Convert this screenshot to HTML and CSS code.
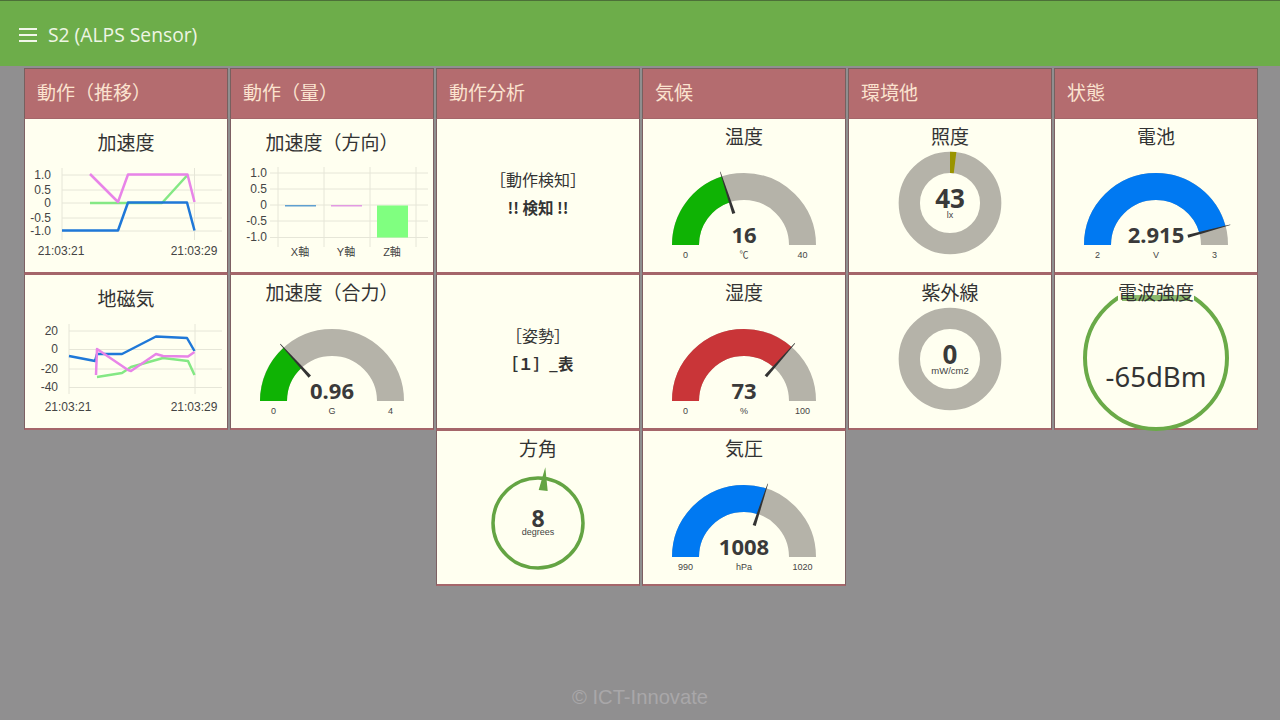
FILE: index.html
```html
<!DOCTYPE html>
<html lang="ja">
<head>
    <meta charset="UTF-8">
    <meta name="viewport" content="width=device-width, initial-scale=1.0">
    <title>S2 (ALPS Sensor)</title>
    <link rel="stylesheet" href="styles.css">
</head>
<body>

    <header class="toolbar">
        <span class="menu-btn"><i></i><i></i><i></i></span>
        <span class="toolbar-title">S2 (ALPS Sensor)</span>
    </header>

    <main class="dashboard">

        <!-- 動作（推移） -->
        <section class="group">
            <h2 class="group-title">動作（推移）</h2>
            <div class="card card-chart">
                <h3 class="card-title">加速度</h3>
                <svg class="widget" viewBox="25 119 202 152">
                    <g class="grid">
                        <path d="M62 175H222M62 190H222M62 203H222M62 218H222M62 231H222M62 168V240M194.5 168V240"/>
                    </g>
                    <g class="axis-label end">
                        <text x="51" y="179">1.0</text>
                        <text x="51" y="194">0.5</text>
                        <text x="51" y="207">0</text>
                        <text x="51" y="222">-0.5</text>
                        <text x="51" y="235">-1.0</text>
                    </g>
                    <g class="axis-label mid">
                        <text x="61" y="255">21:03:21</text>
                        <text x="194" y="255">21:03:29</text>
                    </g>
                    <polyline class="line green" points="90,203 128,203 162,203 187.5,175"/>
                    <polyline class="line pink" points="90,174 118,202 128,174.5 187.5,174.5 194.5,202"/>
                    <polyline class="line blue" points="62,230.5 118,230.5 128,202.5 187,202.5 194.5,230.5"/>
                </svg>
            </div>
            <div class="card card-chart">
                <h3 class="card-title">地磁気</h3>
                <svg class="widget" viewBox="25 275 202 152">
                    <g class="grid">
                        <path d="M69 331H222M69 349.5H222M69 369H222M69 387.5H222M69 324V394M195 324V394"/>
                    </g>
                    <g class="axis-label end">
                        <text x="58" y="335">20</text>
                        <text x="58" y="353">0</text>
                        <text x="58" y="373">-20</text>
                        <text x="58" y="391">-40</text>
                    </g>
                    <g class="axis-label mid">
                        <text x="68" y="411">21:03:21</text>
                        <text x="194" y="411">21:03:29</text>
                    </g>
                    <polyline class="line green" points="97,377 122,373 131,367 163,358 188,361 194.5,375"/>
                    <polyline class="line blue" points="69,356 95,361 97,354 122,354 156,336.5 187,338 194.5,351"/>
                    <polyline class="line pink" points="96,375 97,349 128,370 131,371 156,354 163,356 188,356.5 194.5,352"/>
                </svg>
            </div>
        </section>

        <!-- 動作（量） -->
        <section class="group">
            <h2 class="group-title">動作（量）</h2>
            <div class="card card-chart">
                <h3 class="card-title">加速度（方向）</h3>
                <svg class="widget" viewBox="231 119 202 152">
                    <g class="grid">
                        <path d="M270 173H428M270 189H428M270 205H428M270 221H428M270 237.5H428M278 167V247M324 167V247M370 167V247M416 167V247"/>
                    </g>
                    <g class="axis-label end">
                        <text x="267" y="177">1.0</text>
                        <text x="267" y="193">0.5</text>
                        <text x="267" y="209">0</text>
                        <text x="267" y="225">-0.5</text>
                        <text x="267" y="241">-1.0</text>
                    </g>
                    <g class="axis-label mid small-cjk">
                        <text x="300" y="256">X軸</text>
                        <text x="346" y="256">Y軸</text>
                        <text x="392" y="256">Z軸</text>
                    </g>
                    <rect class="bar-x" x="285" y="205" width="31" height="1.5"/>
                    <rect class="bar-y" x="331" y="205" width="31" height="1.5"/>
                    <rect class="bar-z" x="377" y="205.5" width="31" height="32"/>
                </svg>
            </div>
            <div class="card">
                <h3 class="card-title">加速度（合力）</h3>
                <svg class="widget" viewBox="0 0 202 116">
                    <path class="arc track" d="M42.5 90A58.5 58.5 0 0 1 159.5 90"/>
                    <path class="arc fill-green" d="M42.5 90A58.5 58.5 0 0 1 159.5 90" pathLength="100" stroke-dasharray="26.5 100"/>
                    <polygon class="needle" points="-33,-1.6 -33,1.6 -77,0.3 -77,-0.3" transform="translate(101 90) rotate(47.7)"/>
                    <text class="gauge-value" x="101" y="88">0.96</text>
                    <text class="gauge-label" x="42.5" y="103">0</text>
                    <text class="gauge-label" x="101" y="103">G</text>
                    <text class="gauge-label" x="159.5" y="103">4</text>
                </svg>
            </div>
        </section>

        <!-- 動作分析 -->
        <section class="group">
            <h2 class="group-title">動作分析</h2>
            <div class="card card-text">
                <p class="text-label">［動作検知］</p>
                <p class="text-value">!! 検知 !!</p>
            </div>
            <div class="card card-text">
                <p class="text-label">［姿勢］</p>
                <p class="text-value">［１］_表</p>
            </div>
            <div class="card">
                <h3 class="card-title">方角</h3>
                <svg class="widget" viewBox="0 0 202 116">
                    <circle class="compass-ring" cx="101" cy="56" r="45"/>
                    <polygon class="compass-pointer" points="108.3,0.3 110.7,24 101.7,23"/>
                    <text class="dial-value compass-value" x="101" y="60">8</text>
                    <text class="dial-unit" x="101" y="68">degrees</text>
                </svg>
            </div>
        </section>

        <!-- 気候 -->
        <section class="group">
            <h2 class="group-title">気候</h2>
            <div class="card">
                <h3 class="card-title">温度</h3>
                <svg class="widget" viewBox="0 0 202 116">
                    <path class="arc track" d="M42.5 90A58.5 58.5 0 0 1 159.5 90"/>
                    <path class="arc fill-green" d="M42.5 90A58.5 58.5 0 0 1 159.5 90" pathLength="100" stroke-dasharray="40 100"/>
                    <polygon class="needle" points="-33,-1.6 -33,1.6 -77,0.3 -77,-0.3" transform="translate(101 90) rotate(72)"/>
                    <text class="gauge-value" x="101" y="88">16</text>
                    <text class="gauge-label" x="42.5" y="103">0</text>
                    <text class="gauge-label" x="101" y="103">℃</text>
                    <text class="gauge-label" x="159.5" y="103">40</text>
                </svg>
            </div>
            <div class="card">
                <h3 class="card-title">湿度</h3>
                <svg class="widget" viewBox="0 0 202 116">
                    <path class="arc track" d="M42.5 90A58.5 58.5 0 0 1 159.5 90"/>
                    <path class="arc fill-red" d="M42.5 90A58.5 58.5 0 0 1 159.5 90" pathLength="100" stroke-dasharray="73 100"/>
                    <polygon class="needle" points="-33,-1.6 -33,1.6 -77,0.3 -77,-0.3" transform="translate(101 90) rotate(131.4)"/>
                    <text class="gauge-value" x="101" y="88">73</text>
                    <text class="gauge-label" x="42.5" y="103">0</text>
                    <text class="gauge-label" x="101" y="103">%</text>
                    <text class="gauge-label" x="159.5" y="103">100</text>
                </svg>
            </div>
            <div class="card">
                <h3 class="card-title">気圧</h3>
                <svg class="widget" viewBox="0 0 202 116">
                    <path class="arc track" d="M42.5 90A58.5 58.5 0 0 1 159.5 90"/>
                    <path class="arc fill-blue" d="M42.5 90A58.5 58.5 0 0 1 159.5 90" pathLength="100" stroke-dasharray="60 100"/>
                    <polygon class="needle" points="-33,-1.6 -33,1.6 -77,0.3 -77,-0.3" transform="translate(101 90) rotate(108)"/>
                    <text class="gauge-value" x="101" y="88">1008</text>
                    <text class="gauge-label" x="42.5" y="103">990</text>
                    <text class="gauge-label" x="101" y="103">hPa</text>
                    <text class="gauge-label" x="159.5" y="103">1020</text>
                </svg>
            </div>
        </section>

        <!-- 環境他 -->
        <section class="group">
            <h2 class="group-title">環境他</h2>
            <div class="card">
                <h3 class="card-title">照度</h3>
                <svg class="widget" viewBox="0 0 202 116">
                    <circle class="donut track" cx="101" cy="48" r="40.7"/>
                    <circle class="donut fill-gold" cx="101" cy="48" r="40.7" pathLength="100" stroke-dasharray="2 100" transform="rotate(-90 101 48)"/>
                    <text class="dial-value" x="101" y="52.7">43</text>
                    <text class="dial-unit" x="101" y="62.5">lx</text>
                </svg>
            </div>
            <div class="card">
                <h3 class="card-title">紫外線</h3>
                <svg class="widget" viewBox="0 0 202 116">
                    <circle class="donut track" cx="101" cy="48" r="40.7"/>
                    <text class="dial-value" x="101" y="53">0</text>
                    <text class="dial-unit wide" x="101" y="62.5">mW/cm2</text>
                </svg>
            </div>
        </section>

        <!-- 状態 -->
        <section class="group">
            <h2 class="group-title">状態</h2>
            <div class="card">
                <h3 class="card-title">電池</h3>
                <svg class="widget" viewBox="0 0 202 116">
                    <path class="arc track" d="M42.5 90A58.5 58.5 0 0 1 159.5 90"/>
                    <path class="arc fill-blue" d="M42.5 90A58.5 58.5 0 0 1 159.5 90" pathLength="100" stroke-dasharray="91.5 100"/>
                    <polygon class="needle" points="-33,-1.6 -33,1.6 -77,0.3 -77,-0.3" transform="translate(101 90) rotate(164.7)"/>
                    <text class="gauge-value" x="101" y="88">2.915</text>
                    <text class="gauge-label" x="42.5" y="103">2</text>
                    <text class="gauge-label" x="101" y="103">V</text>
                    <text class="gauge-label" x="159.5" y="103">3</text>
                </svg>
            </div>
            <div class="card">
                <h3 class="card-title signal-title"><span>電波強度</span></h3>
                <svg class="widget" viewBox="0 0 202 116">
                    <circle class="signal-ring" cx="101" cy="47" r="71"/>
                    <text class="signal-value" x="101" y="75.5">-65dBm</text>
                </svg>
            </div>
        </section>

    </main>

    <footer class="footer">© ICT-Innovate</footer>

</body>
</html>
```

FILE: styles.css
```css
* {
    box-sizing: border-box;
}
body {
    margin: 0;
    height: 720px;
    display: flex;
    flex-direction: column;
    overflow: hidden;
    background-color: #908f90;
    font-family: "Noto Sans", "Noto Sans CJK JP", sans-serif;
    color: #333;
}
.toolbar {
    height: 66px;
    flex: none;
    display: flex;
    align-items: center;
    gap: 11px;
    padding: 2px 0 0 19px;
    background-color: #6dad4a;
    border-top: 1px solid #4c6f38;
}
.menu-btn {
    display: flex;
    flex-direction: column;
    gap: 4px;
    width: 18px;
}
.menu-btn i {
    display: block;
    height: 2px;
    background-color: #f1f6ea;
}
.toolbar-title {
    margin-bottom: 1px;
    font-family: "Open Sans", "Noto Sans", sans-serif;
    font-size: 19.3px;
    color: #eef5e4;
}
.dashboard {
    display: flex;
    gap: 2px;
    padding: 2px 0 0 24px;
}
.group {
    width: 204px;
    display: flex;
    flex-direction: column;
}
.group-title {
    height: 50px;
    margin: 0;
    padding: 0 12px;
    line-height: 45px;
    font-size: 19px;
    font-weight: 400;
    color: #fbe3cf;
    background-color: #b46c6f;
    border: 1px solid #77605f;
    border-bottom: 0;
    font-family: "Noto Sans CJK JP", sans-serif;
}
.card {
    height: 156px;
    display: flex;
    flex-direction: column;
    background-color: #fffff0;
    border-style: solid;
    border-width: 1px 1px 2px;
    border-color: #a5666a #7d6063;
}
.card-title {
    height: 36px;
    margin: 0;
    flex: none;
    text-align: center;
    font-size: 19px;
    font-weight: 400;
    line-height: 34px;
    font-family: "Noto Sans CJK JP", sans-serif;
}
.card-chart .card-title {
    height: 0;
    position: relative;
    top: 6px;
}
.card-chart .widget {
    height: 152px;
}
.card-text {
    align-items: center;
    justify-content: center;
    gap: 9px;
    padding-bottom: 4px;
}
.text-label,
.text-value {
    margin: 0;
    line-height: 19px;
    font-family: "Noto Sans CJK JP", sans-serif;
}
.text-label {
    font-size: 16px;
}
.text-value {
    font-size: 15.5px;
    font-weight: 700;
}
.signal-title {
    position: relative;
    z-index: 1;
}
.signal-title span {
    display: inline-block;
    line-height: 18px;
    background: linear-gradient(#8ab86a, #8ab86a) center bottom / 68px 6px no-repeat, #fffff0;
}
.widget {
    display: block;
    width: 202px;
    height: 116px;
    overflow: visible;
}
.grid path {
    fill: none;
    stroke: #e6e6d8;
    stroke-width: 1;
}
.axis-label text {
    font-family: "Liberation Sans", sans-serif;
    font-size: 12px;
    fill: #444;
}
.axis-label.end text {
    text-anchor: end;
}
.axis-label.mid text {
    text-anchor: middle;
}
.axis-label.small-cjk text {
    font-family: "Liberation Sans", "Noto Sans CJK JP", sans-serif;
    font-size: 11px;
}
.line {
    fill: none;
    stroke-width: 2.5;
    stroke-linejoin: round;
}
.line.blue {
    stroke: #1f78d8;
}
.line.pink {
    stroke: #e884e8;
}
.line.green {
    stroke: #84e884;
}
.bar-x {
    fill: #5f9fd0;
}
.bar-y {
    fill: #e29ae2;
}
.bar-z {
    fill: #80ff80;
}
.arc {
    fill: none;
    stroke-width: 27;
}
.donut {
    fill: none;
    stroke-width: 21.3;
}
.track {
    stroke: #b5b3a9;
}
.fill-green {
    stroke: #0fb304;
}
.fill-red {
    stroke: #c93538;
}
.fill-blue {
    stroke: #0079f2;
}
.fill-gold {
    stroke: #9a9400;
}
.needle {
    fill: #333;
}
.gauge-value,
.dial-value {
    font-family: "Noto Sans", sans-serif;
    font-weight: 700;
    font-size: 22px;
    fill: #3a3a3a;
    text-anchor: middle;
}
.dial-value {
    font-size: 26px;
}
.dial-value.compass-value {
    font-size: 23px;
}
.gauge-label,
.dial-unit {
    font-family: "Liberation Sans", "Noto Sans CJK JP", sans-serif;
    font-size: 9px;
    fill: #444;
    text-anchor: middle;
}
.dial-unit.wide {
    font-size: 9.5px;
}
.compass-ring {
    fill: none;
    stroke: #64a443;
    stroke-width: 3.5;
}
.compass-pointer {
    fill: #64a443;
}
.signal-ring {
    fill: none;
    stroke: #6aaa48;
    stroke-width: 4;
}
.signal-value {
    font-family: "Noto Sans", sans-serif;
    font-size: 27.5px;
    fill: #333;
    text-anchor: middle;
}
.footer {
    margin-top: auto;
    padding-bottom: 11px;
    text-align: center;
    font-family: "Liberation Sans", sans-serif;
    font-size: 20.2px;
    color: #a9a7a9;
}
```
